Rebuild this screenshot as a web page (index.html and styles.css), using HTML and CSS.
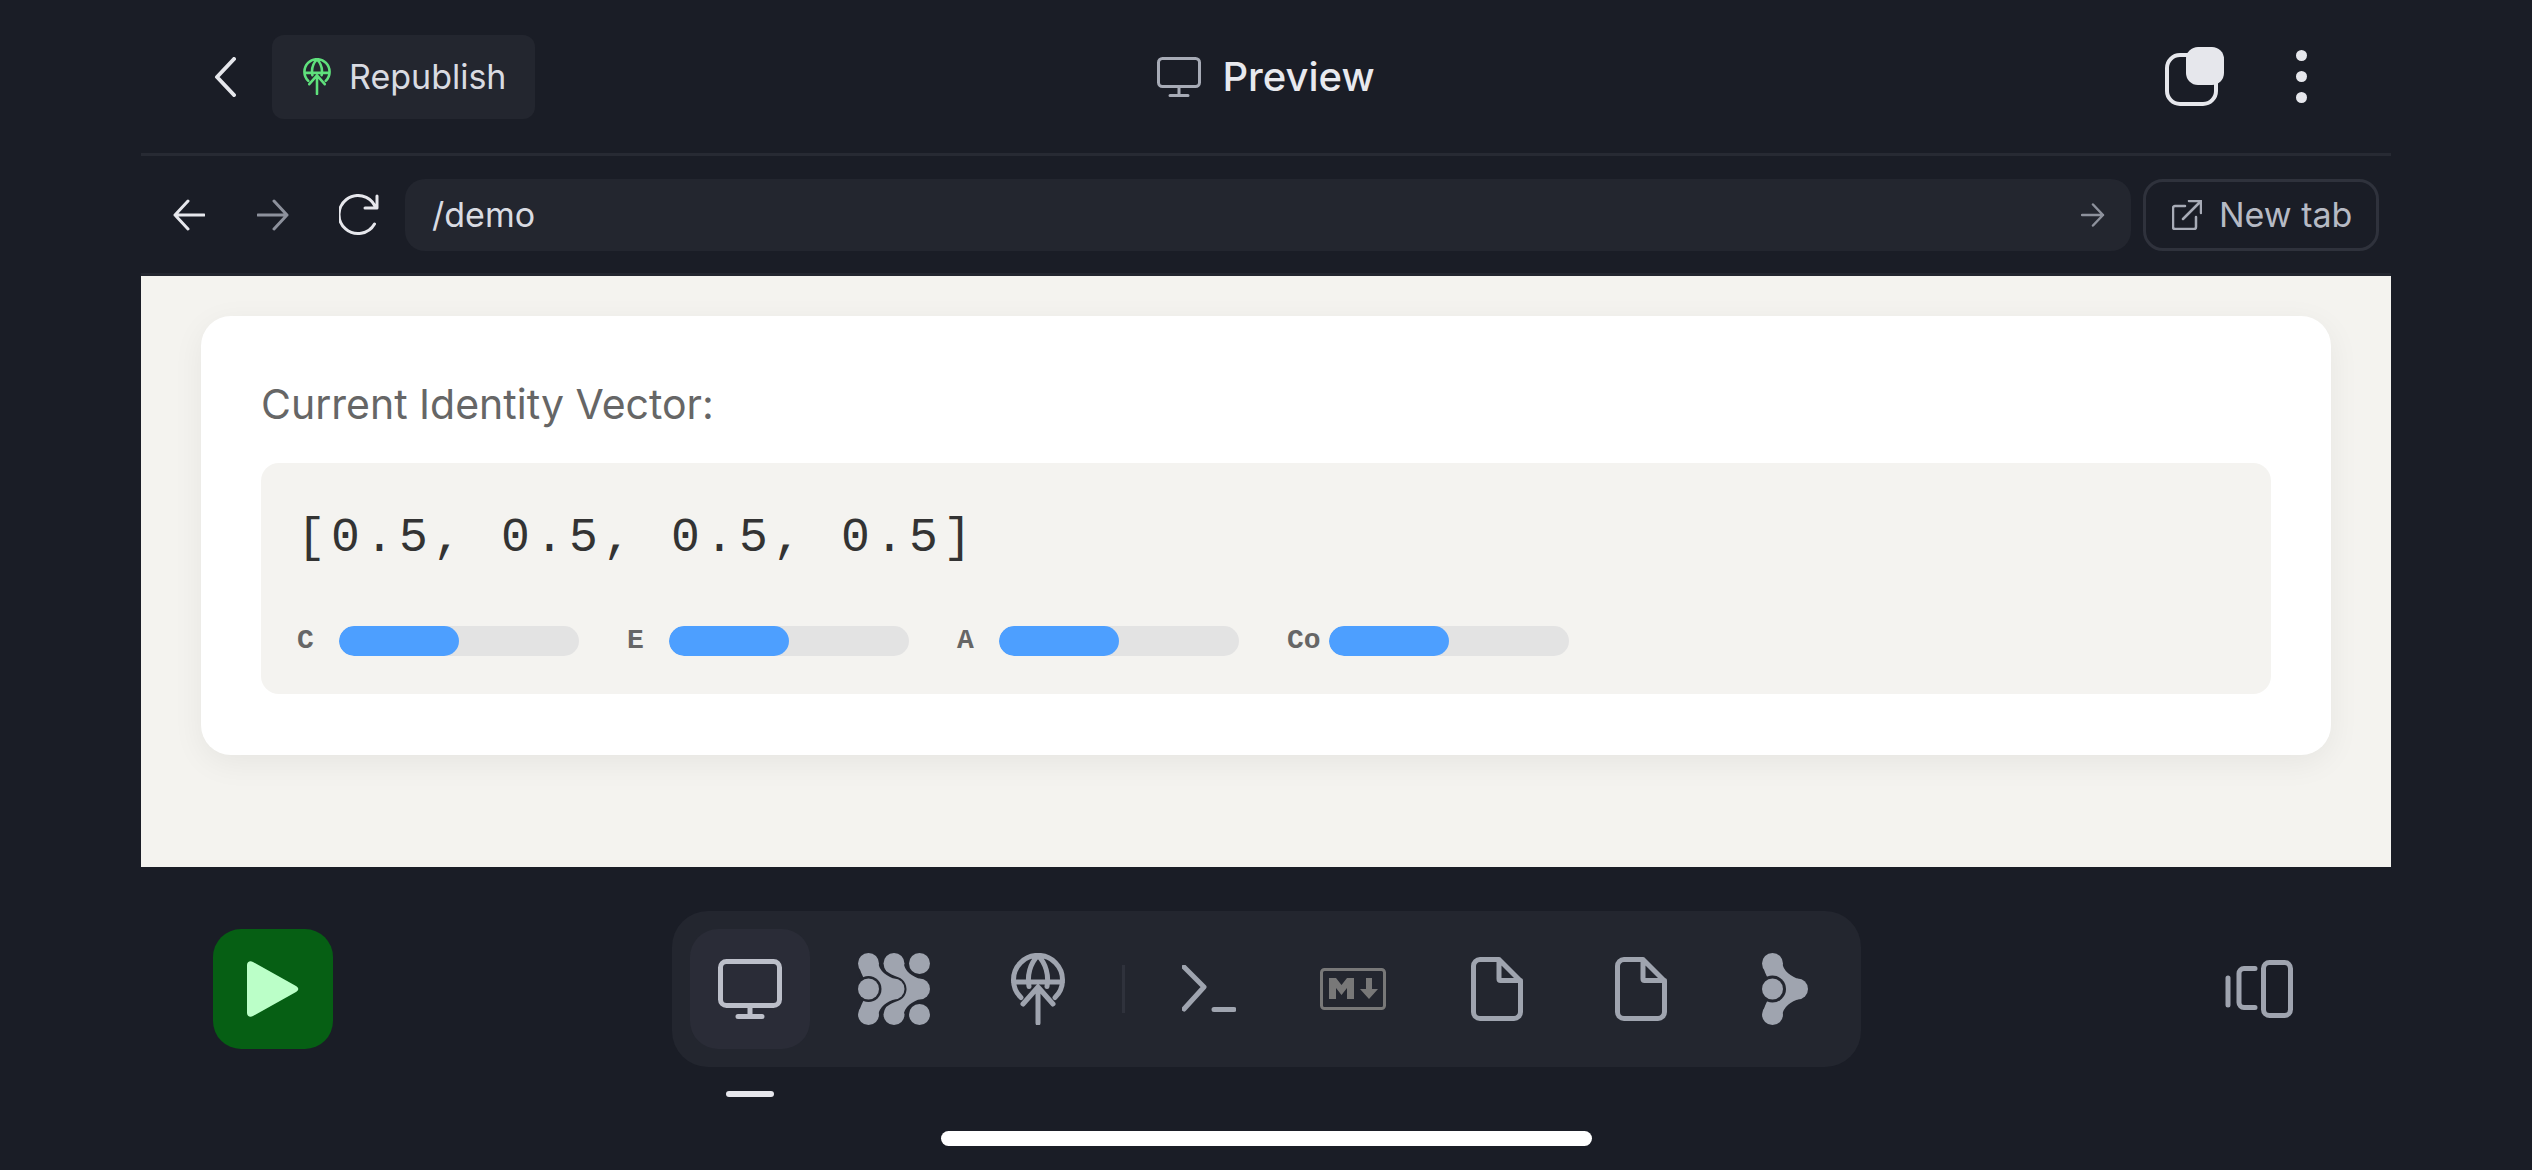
FILE: index.html
```html
<!DOCTYPE html>
<html lang="en">
<head>
    <meta charset="UTF-8">
    <meta name="viewport" content="width=device-width, initial-scale=1.0">
    <title>Preview</title>
    <link rel="stylesheet" href="styles.css">
</head>
<body>
    <div class="frame">
        <header class="topbar">
            <div class="topbar-left">
                <svg class="back-icon" viewBox="0 0 22 40"><path d="M20 2 3 20l17 18"/></svg>
                <div class="republish">
                    <svg class="republish-icon" viewBox="0 0 54 72"><path d="M10 44.500A24.500 24.500 0 1 1 44 44.500M27 2.500c-8 8-11 20-9 31M27 2.500c8 8 11 20 9 31M2.500 29h49M27 36v34M12 51l15-17 15 17"/></svg>
                    <span>Republish</span>
                </div>
            </div>
            <div class="page-title">
                <svg class="title-icon" viewBox="0 0 44 40"><rect x="1.500" y="1.500" width="41" height="28" rx="4"/><path d="M22 30v8M13 38.500h18"/></svg>
                <span>Preview</span>
            </div>
            <div class="topbar-right">
                <div class="copy-icon">
                    <svg viewBox="0 0 59 59"><rect x="2" y="8" width="49" height="49" rx="13"/><rect class="copy-front" x="21" y="0" width="38" height="38" rx="12"/></svg>
                </div>
                <div class="more-icon"><i></i><i></i><i></i></div>
            </div>
        </header>

        <div class="toolbar">
            <svg class="nav-icon" viewBox="0 0 32 32"><path d="M31 16H2M15 2 2 16l13 14"/></svg>
            <svg class="nav-icon nav-off" viewBox="0 0 32 32"><path d="M1 16h29M17 2l13 14-13 14"/></svg>
            <svg class="reload-icon" viewBox="0 0 44 42"><path d="M35.500 30A19 19 0 1 1 36 12M38 2v12H26"/></svg>
            <div class="url-bar">
                <span>/demo</span>
                <svg class="go-icon" viewBox="0 0 24 24"><path d="M1 12h21M12 1.500 22 12 12 22.500"/></svg>
            </div>
            <div class="new-tab">
                <svg viewBox="0 0 30 30"><path d="M13 6H3a2 2 0 0 0-2 2v19a2 2 0 0 0 2 2h19a2 2 0 0 0 2-2V17M11 19 29 1M17 1h12v12"/></svg>
                <span>New tab</span>
            </div>
        </div>

        <main class="preview">
            <section class="card">
                <h2 class="card-title">Current Identity Vector:</h2>
                <div class="vector-box">
                    <div class="vector-value">[0.5, 0.5, 0.5, 0.5]</div>
                    <div class="traits">
                        <div class="trait"><span>C</span><div class="track"><div class="fill" style="width: 50%"></div></div></div>
                        <div class="trait"><span>E</span><div class="track"><div class="fill" style="width: 50%"></div></div></div>
                        <div class="trait"><span>A</span><div class="track"><div class="fill" style="width: 50%"></div></div></div>
                        <div class="trait"><span>Co</span><div class="track"><div class="fill" style="width: 50%"></div></div></div>
                    </div>
                </div>
            </section>
        </main>

        <footer class="bottom">
            <div class="play-btn">
                <svg viewBox="0 0 52 56"><path d="M0 4c0-3 3-5 6-3l43 24c3 2 3 4 0 6L6 55c-3 2-6 0-6-3z"/></svg>
            </div>
            <div class="dock-col">
                <nav class="dock">
                    <div class="dock-item active">
                        <svg class="stroke-icon monitor" viewBox="0 0 64 60"><rect x="2.500" y="2.500" width="59" height="44" rx="6"/><path d="M32 47v10M20 57.500h24"/></svg>
                    </div>
                    <div class="dock-item">
                        <svg class="solid-icon" width="72" height="72" viewBox="0 0 72 72">
                            <circle cx="36" cy="10.500" r="10.500"/><circle cx="61.500" cy="36" r="10.500"/><circle cx="36" cy="61.500" r="10.500"/>
                            <path class="link" d="M36 10.500C38 26 50 32 61.500 36 50 40 38 46 36 61.500"/>
                            <path class="link-gap" d="M10.500 10.500C13 26 25 32 36 36 25 40 13 46 10.500 61.500"/>
                            <circle cx="10.500" cy="10.500" r="10.500"/><circle cx="36" cy="36" r="10.500"/><circle cx="10.500" cy="61.500" r="10.500"/>
                            <path class="link" d="M10.500 10.500C13 26 25 32 36 36 25 40 13 46 10.500 61.500"/>
                            <circle class="halo" cx="10.500" cy="36" r="13"/><circle cx="10.500" cy="36" r="10.500"/>
                            <circle class="halo" cx="61.500" cy="10.500" r="12.500"/><circle cx="61.500" cy="10.500" r="10.500"/>
                            <circle class="halo" cx="61.500" cy="61.500" r="12.500"/><circle cx="61.500" cy="61.500" r="10.500"/>
                        </svg>
                    </div>
                    <div class="dock-item">
                        <svg class="stroke-icon globe" viewBox="0 0 54 72"><path d="M10 44.500A24.500 24.500 0 1 1 44 44.500M27 2.500c-8 8-11 20-9 31M27 2.500c8 8 11 20 9 31M2.500 29h49M27 36v34M12 51l15-17 15 17"/></svg>
                    </div>
                    <div class="dock-sep"></div>
                    <div class="dock-item">
                        <svg class="stroke-icon terminal" viewBox="0 0 54 48"><path d="M2 2 22 22 2 44M32 44.500h20"/></svg>
                    </div>
                    <div class="dock-item">
                        <svg class="md-icon" viewBox="0 0 66 42"><rect x="1.500" y="1.500" width="63" height="39" rx="3"/><path class="md-mark" d="M9 31V10h7l5.500 7 5.500-7h7v21h-7V20l-5.500 7-5.500-7v11zM46 10h6v11h6l-9 10-9-10h6z"/></svg>
                    </div>
                    <div class="dock-item">
                        <svg class="stroke-icon file" viewBox="0 0 52 64"><path d="M28 2.500H9a6.500 6.500 0 0 0-6.500 6.500v46A6.500 6.500 0 0 0 9 61.500h34a6.500 6.500 0 0 0 6.500-6.500V24zM28 2.500V22a1.500 1.500 0 0 0 1.500 1.500h20"/></svg>
                    </div>
                    <div class="dock-item">
                        <svg class="stroke-icon file" viewBox="0 0 52 64"><path d="M28 2.500H9a6.500 6.500 0 0 0-6.500 6.500v46A6.500 6.500 0 0 0 9 61.500h34a6.500 6.500 0 0 0 6.500-6.500V24zM28 2.500V22a1.500 1.500 0 0 0 1.500 1.500h20"/></svg>
                    </div>
                    <div class="dock-item">
                        <svg class="solid-icon" width="46" height="72" viewBox="0 0 46 72">
                            <circle cx="10.500" cy="10.500" r="10.500"/><circle cx="35.500" cy="36" r="10.500"/><circle cx="10.500" cy="61.500" r="10.500"/>
                            <path class="link" d="M10.500 10.500C13 26 25 32 35.500 36 25 40 13 46 10.500 61.500"/>
                            <circle class="halo" cx="10.500" cy="36" r="13.500"/><circle cx="10.500" cy="36" r="10.500"/>
                        </svg>
                    </div>
                </nav>
                <div class="tab-marker"></div>
            </div>
            <svg class="stroke-icon layout-icon" viewBox="0 0 68 58"><path d="M3 18v27M30 8.500H19a5 5 0 0 0-5 5v29a5 5 0 0 0 5 5h11"/><rect x="38.500" y="2.500" width="27" height="53" rx="6"/></svg>
        </footer>
    </div>
    <div class="home-bar"></div>
</body>
</html>
```

FILE: styles.css
```css
* {
    margin: 0;
    padding: 0;
    box-sizing: border-box;
}

body {
    background: #1a1d26;
    color: #e6e7ec;
    font-family: 'Inter', sans-serif;
    height: 1170px;
    overflow: hidden;
}

svg {
    display: block;
    fill: none;
    flex: none;
    stroke-linecap: round;
    stroke-linejoin: round;
}

.frame {
    margin: 0 141px;
    width: 2250px;
}

.topbar {
    display: grid;
    grid-template-columns: 1fr auto 1fr;
    align-items: center;
    height: 156px;
    padding: 0 73px;
    border-bottom: 3px solid #272a33;
}

.topbar-left {
    display: flex;
    align-items: center;
    gap: 36px;
}

.back-icon {
    width: 22px;
    height: 40px;
    stroke: #e6e7ec;
    stroke-width: 4;
}

.republish {
    display: flex;
    align-items: center;
    gap: 18px;
    width: 263px;
    height: 84px;
    padding-left: 31px;
    background: #23262f;
    border-radius: 12px;
    font-size: 34px;
    color: #d9dbe2;
}

.republish-icon {
    width: 28px;
    height: 37px;
    stroke: #5fe07c;
    stroke-width: 5;
}

.page-title {
    display: flex;
    align-items: center;
    gap: 21px;
    font-size: 40px;
    font-weight: 500;
    color: #e8e9ee;
}

.title-icon {
    width: 44px;
    height: 40px;
    stroke: #a7abb6;
    stroke-width: 3;
}

.topbar-right {
    display: flex;
    justify-content: flex-end;
    align-items: center;
    gap: 72px;
    padding-right: 11px;
}

.copy-icon svg {
    width: 59px;
    height: 59px;
    stroke: #e6e7ec;
    stroke-width: 4;
}

.copy-front {
    fill: #e6e7ec;
    stroke: none;
}

.more-icon {
    display: flex;
    flex-direction: column;
    gap: 10px;
}

.more-icon i {
    display: block;
    width: 11px;
    height: 11px;
    border-radius: 50%;
    background: #e6e7ec;
}

.toolbar {
    display: flex;
    align-items: center;
    height: 117px;
    padding: 0 12px 0 32px;
}

.nav-icon {
    width: 32px;
    height: 32px;
    margin-right: 52px;
    stroke: #e6e7ec;
    stroke-width: 3;
}

.nav-off {
    stroke: #8d919c;
    margin-right: 50px;
}

.reload-icon {
    width: 44px;
    height: 42px;
    margin-right: 22px;
    stroke: #e6e7ec;
    stroke-width: 3;
}

.url-bar {
    flex: 1;
    display: flex;
    justify-content: space-between;
    align-items: center;
    height: 72px;
    padding: 0 26px 0 27px;
    background: #23262f;
    border-radius: 20px;
    font-size: 34px;
    color: #d9dbe2;
}

.go-icon {
    width: 24px;
    height: 24px;
    stroke: #8d919c;
    stroke-width: 2.500;
}

.new-tab {
    display: flex;
    align-items: center;
    gap: 17px;
    width: 236px;
    height: 72px;
    margin-left: 12px;
    padding-left: 26px;
    border: 3px solid #2f323c;
    border-radius: 20px;
    font-size: 34px;
    color: #b6bac4;
}

.new-tab svg {
    width: 30px;
    height: 30px;
    stroke: #a7abb6;
    stroke-width: 2.500;
}

.preview {
    height: 594px;
    padding: 40px 60px 0;
    background: #f4f3ef;
    border-top: 3px solid #23262f;
}

.card {
    height: 439px;
    padding: 60px;
    background: #fff;
    border-radius: 30px;
    box-shadow: 0 8px 32px rgba(0, 0, 0, 0.06);
}

.card-title {
    height: 87px;
    font-size: 41px;
    font-weight: 400;
    line-height: 57px;
    color: #666;
}

.vector-box {
    height: 231px;
    padding: 45px 36px 0;
    background: #f4f3f0;
    border-radius: 18px;
}

.vector-value {
    height: 117px;
    font-family: 'Liberation Mono', monospace;
    font-size: 48px;
    line-height: 60px;
    letter-spacing: 5.200px;
    color: #333;
}

.traits {
    display: flex;
    gap: 48px;
}

.trait {
    display: flex;
    align-items: center;
    gap: 8px;
    font-family: 'Liberation Mono', monospace;
    font-size: 28px;
    font-weight: 700;
    color: #666;
}

.trait span {
    width: 34px;
}

.track {
    width: 240px;
    height: 30px;
    background: #e3e3e3;
    border-radius: 15px;
    overflow: hidden;
}

.fill {
    height: 100%;
    background: #4d9fff;
    border-radius: 15px;
}

.bottom {
    display: grid;
    grid-template-columns: 1fr auto 1fr;
    align-items: start;
    height: 264px;
    padding-top: 44px;
}

.play-btn {
    display: flex;
    align-items: center;
    justify-content: center;
    width: 120px;
    height: 120px;
    margin: 18px 0 0 72px;
    background: #065f14;
    border-radius: 28px;
}

.play-btn svg {
    width: 52px;
    height: 56px;
    fill: #bbffc8;
}

.dock {
    display: flex;
    align-items: center;
    gap: 24px;
    height: 156px;
    padding: 0 16px 0 18px;
    background: #23262f;
    border-radius: 36px;
}

.dock-item {
    display: flex;
    align-items: center;
    justify-content: center;
    width: 120px;
    height: 120px;
    border-radius: 28px;
}

.dock-item.active {
    background: #2a2c37;
}

.dock-sep {
    width: 3px;
    height: 48px;
    background: #2f323c;
}

.stroke-icon {
    stroke: #9fa4af;
    stroke-width: 5;
}

.solid-icon {
    fill: #9fa4af;
}

/* links between the logo dots, drawn as thick strokes */
.link {
    fill: none;
    stroke: #9fa4af;
    stroke-width: 19;
}

.link-gap {
    fill: none;
    stroke: #23262f;
    stroke-width: 25;
}

.halo {
    fill: #23262f;
}

.monitor {
    width: 64px;
    height: 60px;
    stroke: #bcbfc9;
}

.globe {
    width: 54px;
    height: 72px;
}

.terminal {
    width: 54px;
    height: 48px;
}

.md-icon {
    width: 66px;
    height: 42px;
    stroke: #787878;
    stroke-width: 3;
}

.md-mark {
    fill: #787878;
    stroke: none;
}

.file {
    width: 52px;
    height: 64px;
}

.tab-marker {
    width: 48px;
    height: 6px;
    margin: 24px 0 0 54px;
    background: #e6e7ec;
    border-radius: 3px;
}

.layout-icon {
    width: 68px;
    height: 58px;
    margin: 49px 98px 0 auto;
}

.home-bar {
    width: 651px;
    height: 15px;
    margin: 0 auto;
    background: #fff;
    border-radius: 8px;
}
```
